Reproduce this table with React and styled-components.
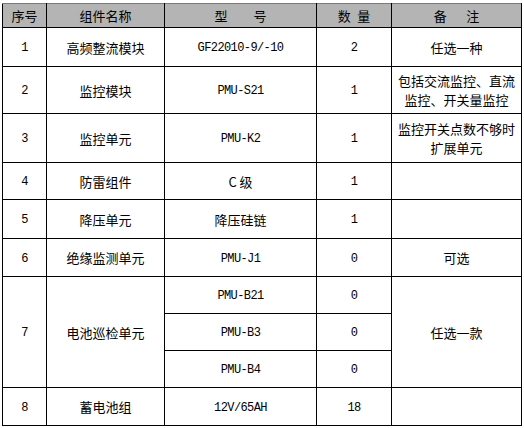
import React from 'react';
import styled, { createGlobalStyle } from 'styled-components';

const GlobalStyle = createGlobalStyle`
  html, body {
    margin: 0;
    padding: 0;
    background: #ffffff;
  }
  body {
    font-family: "Noto Sans CJK SC", "DejaVu Sans", sans-serif;
    color: #000;
  }
`;

const Page = styled.div`
  padding: 3px 0 0 2px;
`;

const Table = styled.table`
  border-collapse: collapse;
  table-layout: fixed;
  width: 519px;
  border-top: 1px solid #7a7a7a;
`;

const HeadRow = styled.tr`
  height: 24px;
  background: #b4b4b4;
`;

const HeadCell = styled.th`
  border: 1px solid #000;
  border-top: 1px solid #7a7a7a;
  padding: 0;
  font-weight: normal;
  font-size: 13px;
  line-height: 16px;
  text-align: center;
  vertical-align: middle;
  white-space: pre;
`;

const Row = styled.tr`
  height: ${(p) => p.$h}px;
`;

const Cell = styled.td`
  border: 1px solid #000;
  padding: 0 4px;
  font-size: 13px;
  line-height: 19px;
  text-align: center;
  vertical-align: middle;
`;

const Code = styled.span`
  font-family: "Liberation Mono", "DejaVu Sans Mono", monospace;
  font-size: 12px;
  letter-spacing: -0.6px;
`;

const Text = ({ v }) =>
  /^[\x20-\x7e]+$/.test(v) ? <Code>{v}</Code> : <>{v}</>;

const rows = [
  { no: '1', name: '高频整流模块', type: 'GF22010-9/-10', qty: '2', note: '任选一种', h: 39 },
  { no: '2', name: '监控模块', type: 'PMU-S21', qty: '1', note: '包括交流监控、直流\n监控、开关量监控', h: 47 },
  { no: '3', name: '监控单元', type: 'PMU-K2', qty: '1', note: '监控开关点数不够时\n扩展单元', h: 49 },
  { no: '4', name: '防雷组件', type: 'C 级', qty: '1', note: '', h: 37 },
  { no: '5', name: '降压单元', type: '降压硅链', qty: '1', note: '', h: 39 },
  { no: '6', name: '绝缘监测单元', type: 'PMU-J1', qty: '0', note: '可选', h: 38 },
];

const group = {
  no: '7',
  name: '电池巡检单元',
  note: '任选一款',
  items: [
    { type: 'PMU-B21', qty: '0', h: 37 },
    { type: 'PMU-B3', qty: '0', h: 37 },
    { type: 'PMU-B4', qty: '0', h: 37 },
  ],
};

const last = { no: '8', name: '蓄电池组', type: '12V/65AH', qty: '18', note: '', h: 38 };

const Note = ({ v }) =>
  v.split('\n').map((line, i) => <div key={i}>{line}</div>);

const App = () => {
  return (
    <Page>
      <GlobalStyle />
      <Table>
        <colgroup>
          <col style={{ width: 44 }} />
          <col style={{ width: 118 }} />
          <col style={{ width: 152 }} />
          <col style={{ width: 75 }} />
          <col style={{ width: 130 }} />
        </colgroup>
        <thead>
          <HeadRow>
            <HeadCell>序号</HeadCell>
            <HeadCell>组件名称</HeadCell>
            <HeadCell>{'型　　号'}</HeadCell>
            <HeadCell>{'数\u2002量'}</HeadCell>
            <HeadCell>{'备\u3000\u2002注'}</HeadCell>
          </HeadRow>
        </thead>
        <tbody>
          {rows.map((r) => (
            <Row key={r.no} $h={r.h}>
              <Cell><Text v={r.no} /></Cell>
              <Cell>{r.name}</Cell>
              <Cell><Text v={r.type} /></Cell>
              <Cell><Text v={r.qty} /></Cell>
              <Cell><Note v={r.note} /></Cell>
            </Row>
          ))}
          {group.items.map((it, i) => (
            <Row key={it.type} $h={it.h}>
              {i === 0 && <Cell rowSpan={3}><Text v={group.no} /></Cell>}
              {i === 0 && <Cell rowSpan={3}>{group.name}</Cell>}
              <Cell><Text v={it.type} /></Cell>
              <Cell><Text v={it.qty} /></Cell>
              {i === 0 && <Cell rowSpan={3}>{group.note}</Cell>}
            </Row>
          ))}
          <Row $h={last.h}>
            <Cell><Text v={last.no} /></Cell>
            <Cell>{last.name}</Cell>
            <Cell><Text v={last.type} /></Cell>
            <Cell><Text v={last.qty} /></Cell>
            <Cell>{last.note}</Cell>
          </Row>
        </tbody>
      </Table>
    </Page>
  );
};

export default App;
